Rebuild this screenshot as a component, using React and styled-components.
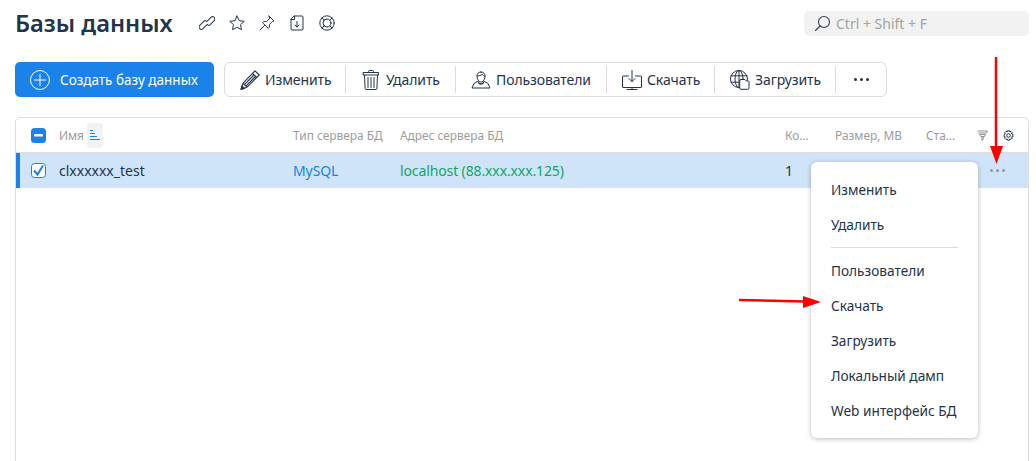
import React from "react";
import styled, { createGlobalStyle } from "styled-components";

const Global = createGlobalStyle`
  html, body { margin: 0; padding: 0; background: #fff; height: 461px; overflow: hidden; }
  body { font-family: "Noto Sans", "Open Sans", sans-serif; color: #24344a; }
  * { box-sizing: border-box; }
`;

const Page = styled.div`
  position: relative;
  width: 1036px;
  height: 461px;
  padding: 0 7px 0 15px;
  overflow: hidden;
`;
const Header = styled.header`
  display: flex;
  align-items: center;
  height: 46px;
`;
const Title = styled.h1`
  margin: 0 26px 0 0;
  font-size: 23.7px;
  line-height: 46px;
  font-weight: 600;
  color: #22344a;
`;
const HeaderIcons = styled.div`
  display: flex;
  align-items: center;
  gap: 14px;
  flex: 1;
`;
const Search = styled.div`
  display: flex;
  align-items: center;
  gap: 5px;
  width: 225px;
  height: 25px;
  padding-left: 10px;
  background: #f2f2f2;
  border-radius: 5px;
  color: #a3a3a3;
  font-size: 14px;
`;
const Toolbar = styled.div`
  display: flex;
  align-items: center;
  margin-top: 16px;
  gap: 10px;
`;
const CreateButton = styled.button`
  display: flex;
  align-items: center;
  gap: 10px;
  width: 199px;
  height: 35px;
  padding: 0 15px;
  border: 0;
  border-radius: 5px;
  background: #1a82e8;
  color: #fff;
  font: 13.5px "Noto Sans", sans-serif;
`;
const ActionGroup = styled.div`
  display: flex;
  align-items: center;
  height: 35px;
  border: 1px solid #d9dadc;
  border-radius: 6px;
`;
const Action = styled.div`
  display: flex;
  align-items: center;
  justify-content: ${(p) => (p.$center ? "center" : "flex-start")};
  gap: 5px;
  width: ${(p) => p.$w}px;
  height: 27px;
  padding-left: ${(p) => (p.$center ? 0 : 15)}px;
  font-size: 14px;
  letter-spacing: -0.1px;
  color: #24344a;
  border-left: ${(p) => (p.$first ? "0" : "1px solid #d9dadc")};
`;
const Table = styled.section`
  margin-top: 20px;
  width: 1014px;
  height: 400px;
  border: 1px solid #dcdddf;
  border-radius: 5px 5px 0 0;
`;
const Columns = `
  display: grid;
  grid-template-columns: 43px 234px 107px 385px 50px 91px 51px 1fr;
  align-items: center;
`;
const HeadRow = styled.div`
  ${Columns}
  height: 35px;
  border-bottom: 1px solid #dcdddf;
  font-size: 11.9px;
  color: #9c9c9c;
`;
const BodyRow = styled.div`
  ${Columns}
  height: 35px;
  background: #cfe4f9;
  box-shadow: inset 4px 0 0 #1a82e8;
  font-size: 14px;
`;
const CheckCell = styled.div`
  display: flex;
  justify-content: center;
  padding-left: 2px;
`;
const NameHead = styled.div`
  display: flex;
  align-items: center;
  gap: 3px;
`;
const SortChip = styled.span`
  display: flex;
  align-items: center;
  justify-content: center;
  width: 16px;
  height: 25px;
  border-radius: 4px;
  background: #f2f2f2;
`;
const HeadTools = styled.div`
  display: flex;
  align-items: center;
  gap: 15px;
`;
const Blue = styled.span`
  color: #1a82e8;
  letter-spacing: -0.1px;
`;
const Green = styled.span`
  color: #12a565;
  letter-spacing: -0.12px;
`;
const Dots = styled.span`
  display: flex;
  gap: 3px;
  padding-left: ${(p) => p.$pad || 0}px;
`;
const Dot = styled.i`
  width: 3px;
  height: 3px;
  border-radius: 50%;
  background: ${(p) => p.$c};
`;
const Menu = styled.nav`
  position: absolute;
  left: 811px;
  top: 162px;
  width: 167px;
  height: 276px;
  padding: 10px 0 0 20px;
  background: #fff;
  border-radius: 6px;
  box-shadow: 0 1px 5px rgba(0, 0, 0, 0.28);
`;
const MenuItem = styled.div`
  height: 35px;
  line-height: 35px;
  font-size: 13.65px;
  white-space: nowrap;
  color: #24344a;
`;
const MenuRule = styled.hr`
  width: 127px;
  height: 1px;
  margin: 5px 0 5px;
  border: 0;
  background: #d9dadc;
`;
const ArrowLayer = styled.svg`
  position: absolute;
  inset: 0;
  pointer-events: none;
`;

const S = { fill: "none", stroke: "#24344a", strokeWidth: 1, strokeLinecap: "round", strokeLinejoin: "round" };

const Icon = ({ size = 16, box = 16, children }) => (
  <svg width={size} height={size} viewBox={`0 0 ${box} ${box}`} {...S} style={{ flex: "none" }}>
    {children}
  </svg>
);

const LinkIcon = () => (
  <Icon>
    <g transform="rotate(-45 8 8)">
      <path d="M6.500 9.200H1.200a2.300 2.300 0 0 1 0-4.600H7.500a1.200 1.200 0 0 1 1.200 1.200V6.800" />
      <path d="M9.500 6.800H14.800a2.300 2.300 0 0 1 0 4.600H8.500a1.200 1.200 0 0 1-1.200-1.200V9.200" />
    </g>
  </Icon>
);
const StarIcon = () => (
  <Icon>
    <path d="M8 1l2.200 4.700 5 .6-3.700 3.400 1 5L8 12.300l-4.500 2.400 1-5L.8 6.300l5-.6z" />
  </Icon>
);
const PinIcon = () => (
  <Icon>
    <path d="M10 1l5 5-1.500.4-3 3-.2 3-1 1L3.500 7.700l1-1 3-.2 3-3z M5.800 10.200 1 15" />
  </Icon>
);
const FileIcon = () => (
  <Icon>
    <path d="M5.500 1H13a1 1 0 0 1 1 1v12a1 1 0 0 1-1 1H3a1 1 0 0 1-1-1V4.500z M5.500 1v3.500H2 M8 6.500v5.500 M6 10 8 12 10 10" />
  </Icon>
);
const RingIcon = () => (
  <Icon>
    <circle cx="8" cy="8" r="7.200" />
    <circle cx="8" cy="8" r="4" />
    <path d="M3 3l2.200 2.200M13 3l-2.200 2.200M3 13l2.200-2.200M13 13l-2.200-2.200" />
  </Icon>
);
const SearchIcon = () => (
  <svg width="17" height="17" viewBox="0 0 17 17" fill="none" stroke="#2d3d50" strokeWidth="1.100" strokeLinecap="round">
    <circle cx="10" cy="7" r="5.500" />
    <path d="M6 11 1.500 15.500" />
  </svg>
);
const PlusIcon = () => (
  <svg width="20" height="20" viewBox="0 0 20 20" fill="none" stroke="#fff" strokeWidth="1" strokeLinecap="round">
    <circle cx="10" cy="10" r="9.500" />
    <path d="M10 4.500v11M4.500 10h11" />
  </svg>
);
const PencilIcon = () => (
  <Icon size={20} box={20}>
    <path d="M15 .8l4.200 4.200L7 17.200l-6 2 2-6z M12.500 3.300l4.200 4.200 M3 13.200l3.800 3.800 M14 5 4.800 14.200 M15.500 6.500 6.300 15.700" strokeWidth="1.100" />
    <path d="M1 19.200l1-3.500 2.500 2.500z" fill="#24344a" />
  </Icon>
);
const TrashIcon = () => (
  <Icon size={20} box={20}>
    <path d="M7.500 2.500V1.500a1 1 0 0 1 1-1h3a1 1 0 0 1 1 1v1 M2.500 2.500h15v2.500h-15z M3.500 5l.6 13.500a1 1 0 0 0 1 1h9.800a1 1 0 0 0 1-1L16.500 5 M7 7.500v10 M10 7.500v10 M13 7.500v10" />
  </Icon>
);
const UserIcon = () => (
  <Icon size={20} box={20}>
    <path d="M10 2c-2.600 0-4 1.800-4 4 0 2.800 1.600 6 4 6s4-3.200 4-6c0-2.200-1.400-4-4-4z M6.100 6C8 6 10 5.500 11.200 4.200c.6 1.200 1.600 1.800 2.700 1.900" />
    <path d="M7.500 11 3 13.500 1 18h18l-2-4.500-4.500-2.500" />
    <path d="M7.500 12.500c1 2 4 2 5 0" strokeWidth="1.400" />
  </Icon>
);
const DownloadIcon = () => (
  <Icon size={20} box={20}>
    <path d="M6.500 6H1a.5.5 0 0 0-.5.5v10.500a.5.5 0 0 0 .5.500h18a.5.5 0 0 0 .5-.5V6.500a.5.5 0 0 0-.5-.5H13.500 M10 .5v11 M7 8.500 10 11.500 13 8.500 M10 17.500v2 M5 19.500h10" />
  </Icon>
);
const GlobeIcon = () => (
  <Icon size={20} box={20}>
    <circle cx="9" cy="9" r="8.500" />
    <ellipse cx="9" cy="9" rx="4" ry="8.500" />
    <path d="M1 5.800h16M1 12.200h8M9 .5v17" />
    <path d="M11 9.500h4l1.500 1.500H18.500a1 1 0 0 1 .5 1v6a1.300 1.300 0 0 1-1.300 1.300H11a1.300 1.300 0 0 1-1.300-1.300V11a1.300 1.300 0 0 1 1.300-1.500z" fill="#fff" />
  </Icon>
);
const SortIcon = () => (
  <svg width="10" height="11" viewBox="0 0 10 11" fill="none" stroke="#1a82e8" strokeWidth="1">
    <path d="M0 .5h3M0 3.500h5M0 6.500h7M0 9.500h10" />
  </svg>
);
const MinusBox = () => (
  <svg width="15" height="15" viewBox="0 0 15 15">
    <rect width="15" height="15" rx="3.500" fill="#1a82e8" />
    <rect x="3" y="6" width="9" height="2.600" rx="1.200" fill="#fff" />
  </svg>
);
const CheckBox = () => (
  <svg width="15" height="15" viewBox="0 0 15 15" fill="none">
    <rect x=".5" y=".5" width="14" height="14" rx="3" fill="#fff" stroke="#1a82e8" />
    <path d="M3 7.500 6.500 11.500 12 2.500" stroke="#1a82e8" strokeWidth="2" />
  </svg>
);
const FilterIcon = () => (
  <svg width="11" height="11" viewBox="0 0 11 11" fill="none" stroke="#777" strokeWidth=".8">
    <path d="M.5 1h10L9.500 3H1.500 M2.500 4.500H8.500L7.500 6.500H4z M4.800 6.500 5 10.500l1.200-1V6.500" />
  </svg>
);
const GearIcon = () => (
  <svg width="11" height="11" viewBox="0 0 11 11" fill="none" stroke="#24344a" strokeWidth="1">
    <path d="M4.500.7h2l.3 1.300 1.200-.6 1.300 1.400-.7 1.200 1.300.5v2l-1.300.4.700 1.200-1.300 1.400-1.200-.6-.3 1.300h-2l-.3-1.300-1.200.6-1.400-1.400.7-1.200-1.200-.4v-2l1.200-.5-.7-1.200 1.400-1.400 1.200.6z" />
    <circle cx="5.500" cy="5.500" r="1.800" />
  </svg>
);

const actions = [
  { w: 120, t: "Изменить", i: <PencilIcon />, first: true },
  { w: 110, t: "Удалить", i: <TrashIcon /> },
  { w: 151, t: "Пользователи", i: <UserIcon /> },
  { w: 108, t: "Скачать", i: <DownloadIcon /> },
  { w: 121, t: "Загрузить", i: <GlobeIcon /> },
];

const menu = ["Изменить", "Удалить", null, "Пользователи", "Скачать", "Загрузить", "Локальный дамп", "Web интерфейс БД"];

export default function App() {
  return (
    <Page>
      <Global />
      <Header>
        <Title>Базы данных</Title>
        <HeaderIcons>
          <LinkIcon />
          <StarIcon />
          <PinIcon />
          <FileIcon />
          <RingIcon />
        </HeaderIcons>
        <Search>
          <SearchIcon />
          Ctrl + Shift + F
        </Search>
      </Header>
      <Toolbar>
        <CreateButton>
          <PlusIcon />
          Создать базу данных
        </CreateButton>
        <ActionGroup>
          {actions.map((a) => (
            <Action key={a.t} $w={a.w} $first={a.first}>
              {a.i}
              {a.t}
            </Action>
          ))}
          <Action $w={51} $center>
            <Dots>
              <Dot $c="#24344a" />
              <Dot $c="#24344a" />
              <Dot $c="#24344a" />
            </Dots>
          </Action>
        </ActionGroup>
      </Toolbar>
      <Table>
        <HeadRow>
          <CheckCell>
            <MinusBox />
          </CheckCell>
          <NameHead>
            Имя
            <SortChip>
              <SortIcon />
            </SortChip>
          </NameHead>
          <div>Тип сервера БД</div>
          <div>Адрес сервера БД</div>
          <div>Ко…</div>
          <div>Размер, MB</div>
          <div>Ста…</div>
          <HeadTools>
            <FilterIcon />
            <GearIcon />
          </HeadTools>
        </HeadRow>
        <BodyRow>
          <CheckCell>
            <CheckBox />
          </CheckCell>
          <div>clxxxxxx_test</div>
          <Blue>MySQL</Blue>
          <Green>localhost (88.xxx.xxx.125)</Green>
          <div>1</div>
          <div />
          <div />
          <Dots $pad={13}>
            <Dot $c="#8a98a8" />
            <Dot $c="#8a98a8" />
            <Dot $c="#8a98a8" />
          </Dots>
        </BodyRow>
      </Table>
      <Menu>
        {menu.map((m, i) => (m ? <MenuItem key={m}>{m}</MenuItem> : <MenuRule key={i} />))}
      </Menu>
      <ArrowLayer width="1036" height="461" viewBox="0 0 1036 461">
        <path d="M996 57v95" stroke="#f00" strokeWidth="2.500" />
        <path d="M990 146h13l-6.500 18z" fill="#f00" />
        <path d="M739 300l66 1.500" stroke="#f00" strokeWidth="2.500" />
        <path d="M803 296l18 6-18 6z" fill="#f00" />
      </ArrowLayer>
    </Page>
  );
}
